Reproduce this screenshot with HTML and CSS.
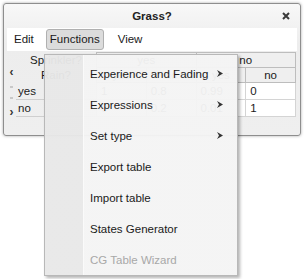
FILE: index.html
```html
<!DOCTYPE html>
<html lang="en">
<head>
    <meta charset="UTF-8">
    <meta name="viewport" content="width=device-width, initial-scale=1.0">
    <link rel="stylesheet" href="styles.css">
    <title>Grass?</title>
</head>
<body>
    <div class="window">
        <div class="titlebar">
            <span></span>
            <span class="title">Grass?</span>
            <span class="close">
                <svg width="8" height="8" viewBox="0 0 8 8"><path d="M1 1 L7 7 M7 1 L1 7" stroke="#3a3a3a" stroke-width="2"/></svg>
            </span>
        </div>

        <div class="menubar">
            <span class="menubar-item">Edit</span>
            <span class="menubar-item open">Functions</span>
            <span class="menubar-item view">View</span>
        </div>

        <div class="table-area">
            <div class="strip">
                <span class="nav">&#8249;</span>
                <span class="grip"></span>
                <span class="grip"></span>
                <span class="nav">&#8250;</span>
            </div>
            <table class="cpt">
                <tr class="head">
                    <th class="label">Sprinkler?</th>
                    <th colspan="2">yes</th>
                    <th colspan="2">no</th>
                </tr>
                <tr class="head">
                    <th class="label">Rain?</th>
                    <th>yes</th>
                    <th>no</th>
                    <th>yes</th>
                    <th>no</th>
                </tr>
                <tr>
                    <td class="label">yes</td>
                    <td>1</td>
                    <td>0.8</td>
                    <td>0.99</td>
                    <td>0</td>
                </tr>
                <tr>
                    <td class="label">no</td>
                    <td>0</td>
                    <td>0.2</td>
                    <td>0.01</td>
                    <td>1</td>
                </tr>
            </table>
        </div>
    </div>

    <!-- dropdown of the Functions menu -->
    <div class="menu">
        <div class="menu-item">Experience and Fading <svg class="arrow" width="6" height="7" viewBox="0 0 6 7"><polygon points="0,0 6,3.5 0,7 2,3.5" fill="#333"/></svg></div>
        <div class="menu-item">Expressions <svg class="arrow" width="6" height="7" viewBox="0 0 6 7"><polygon points="0,0 6,3.5 0,7 2,3.5" fill="#333"/></svg></div>
        <div class="menu-item">Set type <svg class="arrow" width="6" height="7" viewBox="0 0 6 7"><polygon points="0,0 6,3.5 0,7 2,3.5" fill="#333"/></svg></div>
        <div class="menu-item">Export table</div>
        <div class="menu-item">Import table</div>
        <div class="menu-item">States Generator</div>
        <div class="menu-item disabled">CG Table Wizard</div>
    </div>
</body>
</html>
```

FILE: styles.css
```css
html,
body {
    height: 100%;
}

body {
    margin: 0;
    background: #ffffff;
    font-family: "Liberation Sans", Arial, sans-serif;
    font-size: 11px;
    color: #1a1a1a;
    position: relative;
    overflow: hidden;
}

.window {
    margin: 3px;
    width: 298px;
    height: 133px;
    box-sizing: border-box;
    border: 1px solid #8e8e8e;
    border-radius: 3px;
    background: linear-gradient(#f8f8f8, #ededed 30%, #efefef);
    box-shadow: 0 0 3px rgba(0, 0, 0, 0.35);
    padding: 0 3px 0 3px;
}

.titlebar {
    height: 24px;
    display: grid;
    grid-template-columns: 1fr auto 1fr;
    align-items: center;
}

.title {
    font-weight: bold;
    font-size: 11.5px;
    color: #222;
}

.close {
    justify-self: end;
    display: flex;
    margin-right: 7px;
}

.menubar {
    height: 23px;
    background: #ffffff;
    display: flex;
    align-items: center;
}

.menubar-item {
    height: 19px;
    line-height: 19px;
    padding: 0 6px;
    border: 1px solid transparent;
    font-size: 11.5px;
}

.menubar-item.open {
    background: #dcdcdc;
    border-color: #b0b0b0;
    border-radius: 3px;
    margin-left: 5px;
    padding: 0 3px;
}

.menubar-item.view {
    margin-left: 7px;
}

.table-area {
    display: flex;
    margin-top: 1px;
}

.strip {
    width: 9px;
    display: flex;
    flex-direction: column;
    align-items: center;
    padding-top: 15px;
    color: #333;
}

.nav {
    font-size: 12px;
    line-height: 10px;
    font-weight: bold;
}

.grip {
    width: 3px;
    height: 2px;
    background: #c8c8c8;
    margin-top: 9px;
}

.grip + .nav {
    margin-top: 8px;
}

.cpt {
    border-collapse: collapse;
    table-layout: fixed;
    width: 280px;
    font-size: 11.5px;
}

.cpt th,
.cpt td {
    height: 14px;
    padding: 0;
    font-weight: normal;
    line-height: 14px;
}

.cpt th {
    background: #efefef;
    border: 1px solid #bdbdbd;
    text-align: center;
}

.cpt th.label {
    border: none;
    background: transparent;
    width: 80px;
}

.cpt td {
    height: 16px;
    background: #ffffff;
    border: 1px solid #d4d4d4;
    padding-left: 4px;
}

.cpt td.label {
    background: transparent;
    border: none;
    border-bottom: 1px solid #cfcfcf;
    padding-left: 2px;
}

.menu {
    position: absolute;
    left: 44px;
    top: 54px;
    width: 194px;
    height: 222px;
    box-sizing: border-box;
    border: 1px solid #b8b8b8;
    background: linear-gradient(to right, rgba(232, 232, 232, 0.96) 38px, #fafafa 38px, #fafafa 39px, rgba(244, 244, 244, 0.96) 39px);
    box-shadow: 2px 2px 3px rgba(0, 0, 0, 0.3);
    padding-top: 3px;
}

.menu-item {
    height: 31px;
    display: flex;
    align-items: center;
    padding-left: 45px;
    padding-right: 14px;
    font-size: 11.5px;
    color: #1a1a1a;
}

.menu-item .arrow {
    margin-left: auto;
}

.menu-item.disabled {
    color: #a8a8a8;
}
```
